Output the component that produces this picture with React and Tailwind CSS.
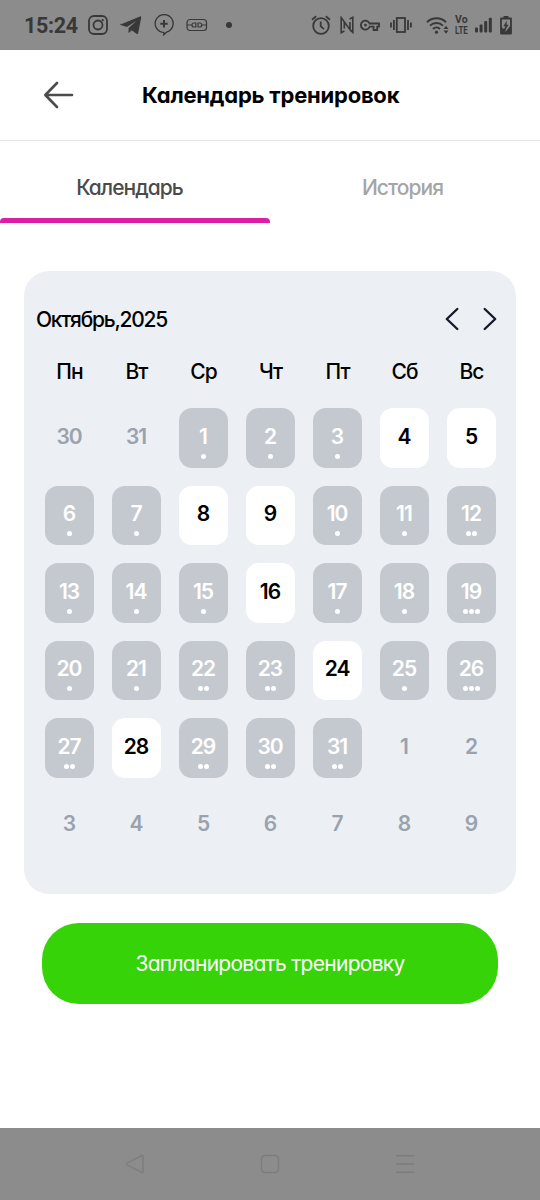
import React from "react";

const weekdays = ["Пн", "Вт", "Ср", "Чт", "Пт", "Сб", "Вс"];

// kind: "out" = other month, "past" = day with trainings, "free" = open day
const out = (n) => ({ n, kind: "out", dots: 0 });
const past = (n, dots = 1) => ({ n, kind: "past", dots });
const free = (n) => ({ n, kind: "free", dots: 0 });

const days = [
  out(30), out(31), past(1), past(2), past(3), free(4), free(5),
  past(6), past(7), free(8), free(9), past(10), past(11), past(12, 2),
  past(13), past(14), past(15), free(16), past(17), past(18), past(19, 3),
  past(20), past(21), past(22, 2), past(23, 2), free(24), past(25), past(26, 3),
  past(27, 2), free(28), past(29, 2), past(30, 2), past(31, 2), out(1), out(2),
  out(3), out(4), out(5), out(6), out(7), out(8), out(9),
];

const kindClass = {
  out: "text-[#9aa2ad]",
  past: "bg-[#c4c9cf] text-white",
  free: "bg-white text-black",
};

function StatusBar() {
  return (
    <div className="flex h-[50px] items-center bg-[#8c8c8c] pl-[24px] font-['Roboto',sans-serif] text-[#383838]">
      <span className="w-[64px] pt-px text-[21.5px] leading-[50px] font-bold tracking-[-0.3px]">15:24</span>
      <svg className="h-5 w-5" viewBox="0 0 20 20" fill="none" stroke="currentColor" strokeWidth="1.8">
        <rect x="1" y="1" width="18" height="18" rx="5" />
        <circle cx="10" cy="10" r="4.5" />
        <circle cx="14.7" cy="5.2" r="1.1" fill="currentColor" stroke="none" />
      </svg>
      <svg className="ml-3 h-5 w-[22px]" viewBox="0 0 22 20" fill="currentColor">
        <path d="M0.5 9.4 20 1.4c.8-.3 1.4.2 1.2 1.2L18.2 18c-.2 1.1-.9 1.3-1.7.8l-4.8-3.5-2.4 2.3c-.5.4-.8.3-.8-.4l.1-4.2 8-7.3-9.8 6.2-6-1.8c-.9-.3-1-1.2-.3-1.7z" />
      </svg>
      <svg className="ml-3 h-[22px] w-5" viewBox="0 0 20 22" fill="none" stroke="currentColor">
        <path d="M7.8 18.2A9 9 0 1 1 12.5 18.2L9.8 20.8V18.5z" strokeWidth="1.3" />
        <path d="M10 6v7.4M6.3 9.7h7.4" strokeWidth="2" />
      </svg>
      <svg className="ml-3 h-[14px] w-[22px]" viewBox="0 0 22 14" fill="none" stroke="currentColor" strokeWidth="1.2">
        <rect x="1" y="1.5" width="19.5" height="11" rx="3" />
        <path d="M1 7h5M15.5 7h5M9.8 5H8a2 2 0 0 0 0 4h1.8zM12 5h1.8a2 2 0 0 1 0 4H12z" />
      </svg>
      <div className="ml-[18px] h-[6px] w-[6px] rounded-full bg-[#383838]" />

      <svg className="ml-[79px] h-5 w-5" viewBox="0 0 20 20" fill="none" stroke="currentColor" strokeWidth="1.8">
        <circle cx="10" cy="11" r="7.8" />
        <path d="M9.7 6.5v4.7l3.2 3M1 4.7 5.2 1.3M19 4.7l-4.2-3.4" />
      </svg>
      <svg className="ml-[9px] h-[18px] w-[14px]" viewBox="0 0 14 18" fill="none" stroke="currentColor" strokeWidth="1.6">
        <path d="M4.4 15 1.2 16.6V1.6L10 13.6V6M9.6 3 12.8 1.4V16.4L9.8 13.400M4.300 6v6.500" />
      </svg>
      <svg className="ml-[6px] h-3 w-5" viewBox="0 0 20 12" fill="none" stroke="currentColor" strokeWidth="1.8">
        <path d="M9.6 4.5H19v3.2h-1.8V11h-3.6V7.7h-4A4.5 4.5 0 1 1 9.6 4.5z" />
        <circle cx="5.5" cy="6.1" r="1.4" fill="currentColor" stroke="none" />
      </svg>
      <svg className="ml-[10px] h-4 w-[22px]" viewBox="0 0 22 16" fill="none" stroke="currentColor" strokeWidth="1.8">
        <rect x="6.8" y="1" width="8.2" height="14" />
        <path d="M3.9 3v10M1 5.5v5M18 3v10M20.9 5.5v5" />
      </svg>
      <svg className="ml-[14px] h-5 w-[24px]" viewBox="0 0 24 20" fill="none" stroke="currentColor" strokeWidth="2">
        <path d="M1 7.2a13.7 13.7 0 0 1 19 0M4 10.6a9.3 9.3 0 0 1 13 0M7 14a5 5 0 0 1 7 0" />
        <circle cx="10.5" cy="17.2" r="1.6" fill="currentColor" stroke="none" />
        <path d="m20 10.8 2.5 3.2h-5zM20 18.7l2.5-3.2h-5z" fill="currentColor" stroke="none" />
      </svg>
      <div className="ml-[5px] flex w-[16px] flex-col items-start text-[11px] leading-[11px] font-bold">
        <span className="origin-left scale-x-95 tracking-[0.2px]">Vo</span>
        <span className="origin-left scale-x-[0.72]">LTE</span>
      </div>
      <svg className="ml-[4px] h-4 w-[17px]" viewBox="0 0 17 16" fill="currentColor">
        <rect x="0" y="10.5" width="3" height="5" rx="1" />
        <rect x="4.6" y="7.5" width="3" height="8" rx="1" />
        <rect x="9.2" y="4" width="3" height="11.5" rx="1" />
        <rect x="13.8" y="0.8" width="3" height="14.7" rx="1" />
      </svg>
      <svg className="ml-[8px] h-5 w-3" viewBox="0 0 12 20" fill="none" stroke="currentColor">
        <path d="M1 3.5h10v15H1z" strokeWidth="1.8" strokeLinejoin="round" />
        <path d="M3.5 1h5v2h-5zM1 12l3 2 1-1.5h1l-.7 4.5L11 10v9H1z" fill="currentColor" stroke="none" />
        <path d="M6.8 5.5 3.4 11.3h1.9l-.5 4.5 3.8-6H6.5z" fill="currentColor" stroke="none" />
      </svg>
    </div>
  );
}

function Day({ n, kind, dots }) {
  return (
    <div className={`flex h-[59.5px] flex-col items-center rounded-[13px] pt-[14.5px] ${kindClass[kind]}`}>
      <span className="-ml-px text-[21px] leading-[27px] font-semibold tracking-[-1px]">{n}</span>
      <div className="mt-[4px] flex gap-[1px]">
        {Array.from({ length: dots }, (_, i) => (
          <i key={i} className="h-[5px] w-[5px] rounded-full bg-white" />
        ))}
      </div>
    </div>
  );
}

export default function App() {
  return (
    <div className="flex h-[1200px] w-[540px] flex-col bg-white font-['Inter',sans-serif] [font-feature-settings:'cv11']">
      <StatusBar />
      <header className="flex h-[91px] items-center border-b border-[#e6e6e6] pl-[43px]">
        <svg className="h-[28px] w-[31px]" viewBox="0 0 31 28" fill="none" stroke="#4b4b4b" strokeWidth="2.6" strokeLinecap="round" strokeLinejoin="round">
          <path d="M29 14H2.5M14 2 2.3 14 14 26" />
        </svg>
        <h1 className="ml-[68px] text-[22px] leading-[30px] font-bold tracking-[-0.22px] whitespace-nowrap text-black">Календарь тренировок</h1>
      </header>

      <div className="grid h-[82px] grid-cols-2 text-[21px] tracking-[-0.95px]">
        <div className="flex flex-col items-center justify-between pt-[32px] font-medium text-[#4b4b4b]">
          <span className="-ml-[11px] leading-[30px]">Календарь</span>
          <div className="h-[5px] w-full rounded-t-[4px] bg-[#db1fa4]" />
        </div>
        <div className="flex justify-center pt-[32px] text-[#a5a5a5]">
          <span className="-ml-[5px] leading-[30px] font-medium">История</span>
        </div>
      </div>

      <section className="mx-6 mt-[48px] h-[623px] rounded-[25px] bg-[#ecf0f5] px-[12px] pt-[33px]">
        <div className="flex h-[30px] items-center justify-between pr-[7px]">
          <h2 className="pt-[2px] text-[21px] leading-[30px] font-medium tracking-[-1.25px] text-black">Октябрь,2025</h2>
          <div className="flex gap-[24px]">
            <svg className="h-6 w-[14px]" viewBox="0 0 14 24" fill="none" stroke="#171a2c" strokeWidth="2.4" strokeLinecap="round" strokeLinejoin="round">
              <path d="M12.3 2 1.8 12l10.5 10" />
            </svg>
            <svg className="h-6 w-[14px]" viewBox="0 0 14 24" fill="none" stroke="#171a2c" strokeWidth="2.4" strokeLinecap="round" strokeLinejoin="round">
              <path d="M1.7 2 12.2 12 1.7 22" />
            </svg>
          </div>
        </div>
        <div className="ml-[9px] mt-[23px] grid w-[451px] grid-cols-7 gap-x-[18px] text-center text-[21px] leading-[30px] font-medium tracking-[-1px] text-black">
          {weekdays.map((d) => (
            <span key={d}>{d}</span>
          ))}
        </div>
        <div className="ml-[9px] mt-[21px] grid w-[451px] grid-cols-7 gap-[18px]">
          {days.map((d, i) => (
            <Day key={i} {...d} />
          ))}
        </div>
      </section>

      <button className="mx-[42px] mt-[28.5px] h-[81px] rounded-[37px] bg-[#35d308] pt-px text-[21px] tracking-[-0.72px] text-white">
        Запланировать тренировку
      </button>

      <nav className="mt-auto flex h-[72px] items-center justify-between bg-[#8c8c8c] px-[125px] text-[#7c7c7c]">
        <svg className="h-5 w-5" viewBox="0 0 20 20" fill="none" stroke="currentColor" strokeWidth="1.4" strokeLinejoin="round">
          <path d="M2.2 9 16.8 1.6q1.2-.5 1.2.8v15.2q0 1.3-1.2.8L2.2 11q-1.6-1 0-2z" />
        </svg>
        <svg className="h-5 w-5" viewBox="0 0 20 20" fill="none" stroke="currentColor" strokeWidth="1.4">
          <rect x="1.5" y="1.5" width="17" height="17" rx="3.5" />
        </svg>
        <svg className="h-5 w-5" viewBox="0 0 20 20" fill="none" stroke="currentColor" strokeWidth="1.5">
          <path d="M1 1.8h18M1 10h18M1 18.2h18" />
        </svg>
      </nav>
    </div>
  );
}
